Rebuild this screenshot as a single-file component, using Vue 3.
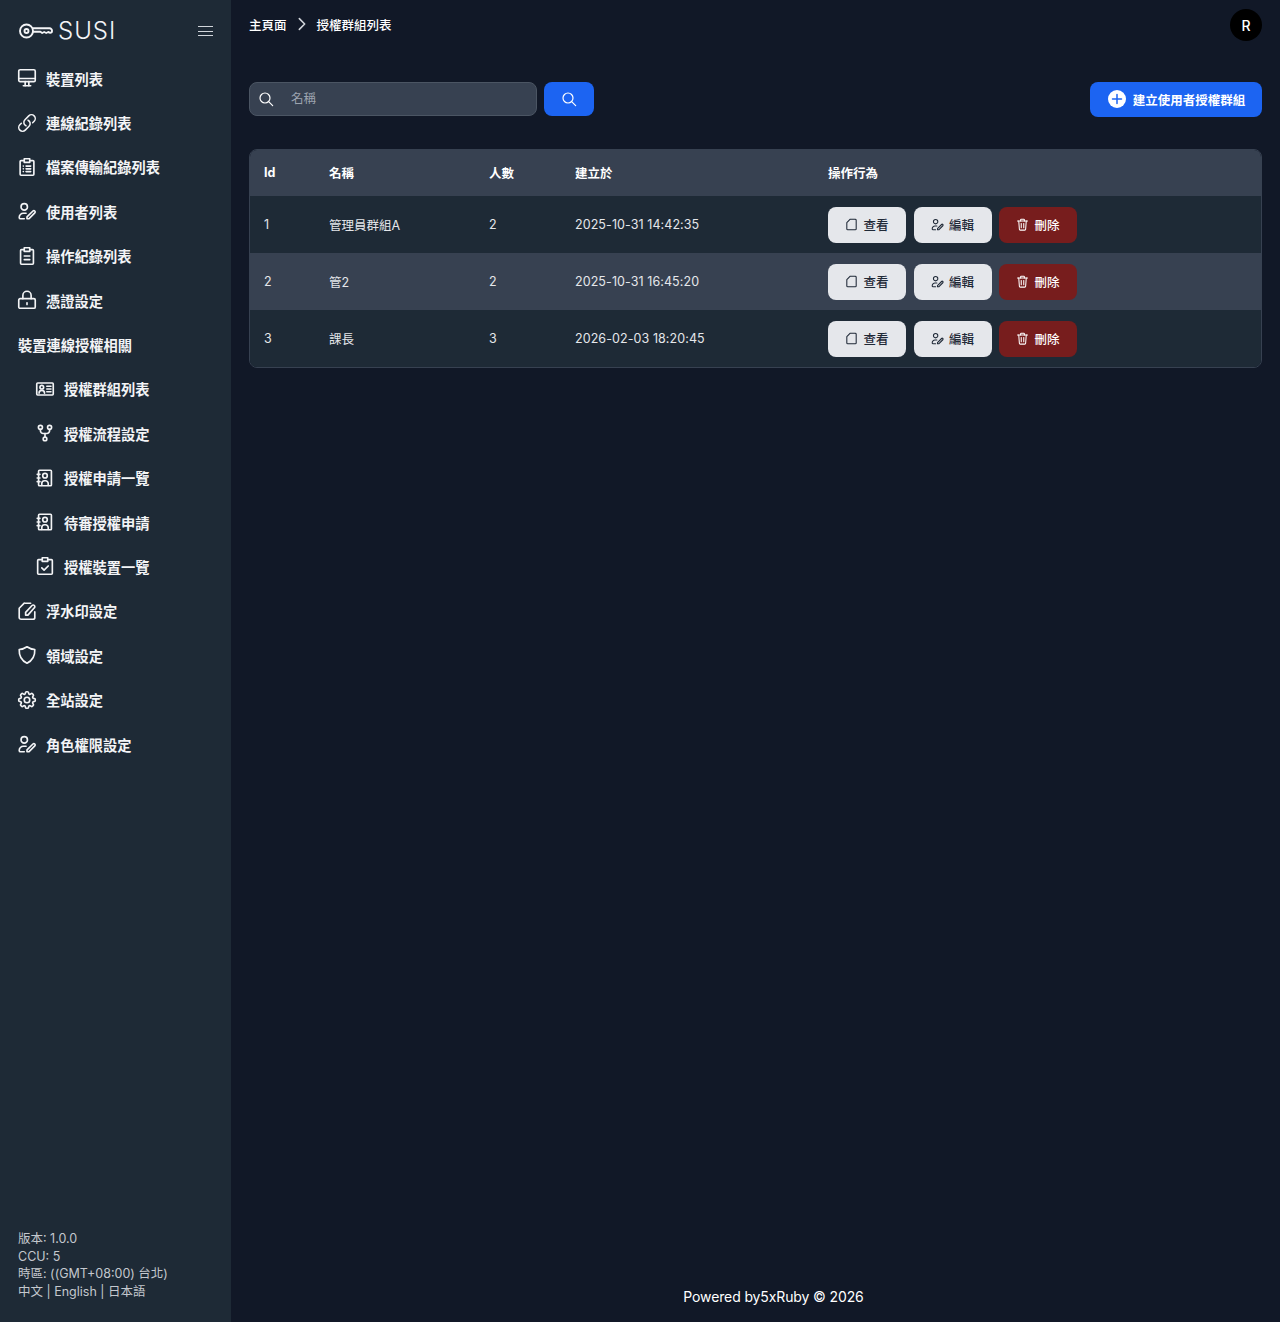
<script setup>
const icons = {
  monitor: ['M4.500 3h15A1.500 1.500 0 0 1 21 4.500v10a1.500 1.500 0 0 1-1.500 1.500h-15A1.500 1.500 0 0 1 3 14.500v-10A1.500 1.500 0 0 1 4.500 3Z', 'M3 12.500h18', 'M10 16v4.500', 'M14 16v4.500', 'M8 20.500h8'],
  link: ['M13.19 8.688a4.5 4.5 0 0 1 1.242 7.244l-4.5 4.5a4.5 4.5 0 0 1-6.364-6.364l1.757-1.757m13.35-.622 1.757-1.757a4.5 4.5 0 0 0-6.364-6.364l-4.5 4.5a4.5 4.5 0 0 0 1.242 7.244'],
  list: ['M9 5H5.500a1 1 0 0 0-1 1v14a1 1 0 0 0 1 1h13a1 1 0 0 0 1-1V6a1 1 0 0 0-1-1H15', 'M9 3h6v4H9z', 'M8 11h.01', 'M11 11h5', 'M8 14h.01', 'M11 14h5', 'M8 17h.01', 'M11 17h5'],
  userPen: ['M9 11a3.500 3.500 0 1 0 0-7 3.500 3.500 0 0 0 0 7Z', 'M9 20.500H5A1.500 1.500 0 0 1 3.500 19a4.500 4.500 0 0 1 4.500-4.500h3', 'M12 20.500v-2L18.500 12a1.400 1.400 0 0 1 2 2L14 20.500h-2Z'],
  clipboard: ['M9 5H6a1 1 0 0 0-1 1v14a1 1 0 0 0 1 1h12a1 1 0 0 0 1-1V6a1 1 0 0 0-1-1h-3', 'M9 3h6v4H9z', 'M9 12h6', 'M9 16h6'],
  lock: ['M4.500 10.500h15a1.500 1.500 0 0 1 1.500 1.500v7.500a1.500 1.500 0 0 1-1.500 1.500h-15A1.500 1.500 0 0 1 3 19.500V12a1.500 1.500 0 0 1 1.500-1.500Z', 'M7.500 10.500V7a4.500 4.500 0 0 1 9 0v3.500', 'M12 15v2'],
  card: ['M4 5.500h16a1 1 0 0 1 1 1v11a1 1 0 0 1-1 1H4a1 1 0 0 1-1-1v-11a1 1 0 0 1 1-1Z', 'M8.500 12a2 2 0 1 0 0-4 2 2 0 0 0 0 4Z', 'M5.500 16.500a3 3 0 0 1 6 0', 'M14 9h4.500', 'M14 12h4.500', 'M14 15h4.500'],
  fork: ['M7 8a2.200 2.200 0 1 0 0-4.400A2.200 2.200 0 0 0 7 8Z', 'M17 8a2.200 2.200 0 1 0 0-4.400A2.200 2.200 0 0 0 17 8Z', 'M12 20.500a2 2 0 1 0 0-4 2 2 0 0 0 0 4Z', 'M7 8v1.500a3 3 0 0 0 3 3h4a3 3 0 0 0 3-3V8', 'M12 12.500v4'],
  book: ['M6 3.500h12a1 1 0 0 1 1 1v15a1 1 0 0 1-1 1H6a1 1 0 0 1-1-1v-15a1 1 0 0 1 1-1Z', 'M3.500 8H6.500', 'M3.500 12H6.500', 'M3.500 16H6.500', 'M12 12a2.500 2.500 0 1 0 0-5 2.500 2.500 0 0 0 0 5Z', 'M8.500 20v-2a3 3 0 0 1 3-3h1a3 3 0 0 1 3 3v2'],
  check: ['M9 5H5a1 1 0 0 0-1 1v14a1 1 0 0 0 1 1h14a1 1 0 0 0 1-1V6a1 1 0 0 0-1-1h-4', 'M9 3h6v4H9z', 'M8.500 14l2.500 2.500 4.500-4.500'],
  filePen: ['M10 3.500h6', 'M20.500 13v6a2 2 0 0 1-2 2h-13a2 2 0 0 1-2-2V9l5.500-5.500', 'M10.500 16.500v-3l7-7.500a1.500 1.500 0 0 1 2.500 2.500l-7 8h-2.500Z'],
  shield: ['M12 3c2.500 1.800 5.500 2.800 8.500 3 .3 6.500-2 11.800-8.500 15C5.500 17.800 3.200 12.500 3.500 6 6.500 5.800 9.500 4.800 12 3Z'],
  cog: ['M10.343 3.94c.09-.542.56-.94 1.11-.94h1.093c.55 0 1.02.398 1.11.94l.149.894c.07.424.384.764.78.93.398.164.855.142 1.205-.108l.737-.527a1.125 1.125 0 0 1 1.45.12l.773.774c.39.389.44 1.002.12 1.45l-.527.737c-.25.35-.272.806-.107 1.204.165.397.505.71.93.78l.893.15c.543.09.94.559.94 1.109v1.094c0 .55-.397 1.02-.94 1.11l-.894.149c-.424.07-.764.383-.929.78-.165.398-.143.854.107 1.204l.527.738c.32.447.269 1.06-.12 1.45l-.774.773a1.125 1.125 0 0 1-1.449.12l-.738-.527c-.35-.25-.806-.272-1.203-.107-.398.165-.71.505-.781.929l-.149.894c-.09.542-.56.94-1.11.94h-1.094c-.55 0-1.019-.398-1.11-.94l-.148-.894c-.071-.424-.384-.764-.781-.93-.398-.164-.854-.142-1.204.108l-.738.527c-.447.32-1.06.269-1.45-.12l-.773-.774a1.125 1.125 0 0 1-.12-1.45l.527-.737c.25-.35.272-.806.108-1.204-.165-.397-.506-.71-.93-.78l-.894-.15c-.542-.09-.94-.56-.94-1.109v-1.094c0-.55.398-1.02.94-1.11l.894-.149c.424-.07.765-.383.93-.78.165-.398.143-.854-.108-1.204l-.526-.738a1.125 1.125 0 0 1 .12-1.45l.773-.773a1.125 1.125 0 0 1 1.45-.12l.737.527c.35.25.807.272 1.204.107.397-.165.71-.505.78-.929l.15-.894Z', 'M15 12a3 3 0 1 1-6 0 3 3 0 0 1 6 0Z'],
  file: ['M10 3.500h8a1.500 1.500 0 0 1 1.500 1.500v14a1.500 1.500 0 0 1-1.500 1.500H6A1.500 1.500 0 0 1 4.500 19V9L10 3.500Z'],
  trash: ['M4 6.500h16', 'M9 6.500V4.500a1 1 0 0 1 1-1h4a1 1 0 0 1 1 1v2', 'M6 6.500l1 13a1.500 1.500 0 0 0 1.500 1.500h7a1.500 1.500 0 0 0 1.500-1.500l1-13', 'M10 10.500v6.500', 'M14 10.500v6.500']
}

const navItems = [
  { label: '裝置列表', icon: 'monitor' },
  { label: '連線紀錄列表', icon: 'link', viewBox: '-1 -1 26 26' },
  { label: '檔案傳輸紀錄列表', icon: 'list' },
  { label: '使用者列表', icon: 'userPen' },
  { label: '操作紀錄列表', icon: 'clipboard' },
  { label: '憑證設定', icon: 'lock' },
  { label: '裝置連線授權相關' },
  { label: '授權群組列表', icon: 'card', sub: true },
  { label: '授權流程設定', icon: 'fork', sub: true },
  { label: '授權申請一覽', icon: 'book', sub: true },
  { label: '待審授權申請', icon: 'book', sub: true },
  { label: '授權裝置一覽', icon: 'check', sub: true },
  { label: '浮水印設定', icon: 'filePen' },
  { label: '領域設定', icon: 'shield' },
  { label: '全站設定', icon: 'cog' },
  { label: '角色權限設定', icon: 'userPen' }
]

const rows = [
  { id: 1, name: '管理員群組A', count: 2, createdAt: '2025-10-31 14:42:35' },
  { id: 2, name: '管2', count: 2, createdAt: '2025-10-31 16:45:20' },
  { id: 3, name: '課長', count: 3, createdAt: '2026-02-03 18:20:45' }
]

const actions = [
  { label: '查看', icon: 'file', cls: 'btn-light' },
  { label: '編輯', icon: 'userPen', cls: 'btn-light' },
  { label: '刪除', icon: 'trash', cls: 'btn-danger' }
]
</script>

<template>
  <div class="layout">
    <aside class="sidebar">
      <div class="brand">
        <div class="logo">
          <svg class="logo-key" viewBox="0 0 34 16" fill="none" stroke="currentColor" stroke-width="1.900" stroke-linecap="round" stroke-linejoin="round">
            <circle cx="7.500" cy="8" r="6.500" />
            <circle cx="7.500" cy="8" r="2" />
            <path d="M14 5.200h16.500a2.600 2.600 0 0 1 2.500 2.800c0 1-.8 1.800-1.800 1.800l-2-.8-2 1-2-1-2 1-1.800-1.200H14" />
          </svg>
          <span class="logo-text">SUSI</span>
        </div>
        <button class="menu-btn" aria-label="menu">
          <span></span><span></span><span></span>
        </button>
      </div>

      <nav class="nav">
        <a
          v-for="item in navItems"
          :key="item.label"
          class="nav-item"
          :class="{ 'is-sub': item.sub, 'is-group': !item.icon }"
        >
          <svg v-if="item.icon" class="nav-icon" :viewBox="item.viewBox || '0 0 24 24'" fill="none" stroke="currentColor" stroke-width="1.800" stroke-linecap="round" stroke-linejoin="round">
            <path v-for="d in icons[item.icon]" :key="d" :d="d" />
          </svg>
          <span>{{ item.label }}</span>
        </a>
      </nav>

      <div class="side-footer">
        <div>版本: 1.0.0</div>
        <div>CCU: 5</div>
        <div>時區: ((GMT+08:00) 台北)</div>
        <div>中文 | English | 日本語</div>
      </div>
    </aside>

    <main class="main">
      <header class="topbar">
        <div class="crumbs">
          <span>主頁面</span>
          <svg class="crumb-sep" viewBox="0 0 24 24" fill="none" stroke="currentColor" stroke-width="2.400" stroke-linecap="round" stroke-linejoin="round">
            <path d="M8 4l8 8-8 8" />
          </svg>
          <span>授權群組列表</span>
        </div>
        <div class="avatar">R</div>
      </header>

      <div class="toolbar">
        <form class="search" @submit.prevent>
          <div class="search-field">
            <svg class="search-icon" viewBox="0 0 24 24" fill="none" stroke="currentColor" stroke-width="1.800" stroke-linecap="round">
              <circle cx="10.500" cy="10.500" r="7.500" />
              <path d="M16 16l6 6" />
            </svg>
            <input type="text" placeholder="名稱" />
          </div>
          <button class="search-btn" type="submit" aria-label="search">
            <svg class="search-icon" viewBox="0 0 24 24" fill="none" stroke="currentColor" stroke-width="1.800" stroke-linecap="round">
              <circle cx="10.500" cy="10.500" r="7.500" />
              <path d="M16 16l6 6" />
            </svg>
          </button>
        </form>
        <button class="create-btn">
          <svg class="plus-icon" viewBox="0 0 18 18">
            <circle cx="9" cy="9" r="9" fill="#fff" />
            <path d="M9 4.500v9M4.500 9h9" stroke="#1c64f2" stroke-width="1.500" stroke-linecap="round" />
          </svg>
          建立使用者授權群組
        </button>
      </div>

      <div class="table-wrap">
        <table class="table">
          <colgroup>
            <col class="col-id" />
            <col class="col-name" />
            <col class="col-count" />
            <col class="col-date" />
            <col />
          </colgroup>
          <thead>
            <tr>
              <th>Id</th>
              <th>名稱</th>
              <th>人數</th>
              <th>建立於</th>
              <th>操作行為</th>
            </tr>
          </thead>
          <tbody>
            <tr v-for="row in rows" :key="row.id">
              <td>{{ row.id }}</td>
              <td>{{ row.name }}</td>
              <td>{{ row.count }}</td>
              <td class="date">{{ row.createdAt }}</td>
              <td>
                <div class="actions">
                  <button v-for="action in actions" :key="action.label" class="action-btn" :class="action.cls">
                    <svg class="action-icon" viewBox="0 0 24 24" fill="none" stroke="currentColor" stroke-width="1.700" stroke-linecap="round" stroke-linejoin="round">
                      <path v-for="d in icons[action.icon]" :key="d" :d="d" />
                    </svg>
                    {{ action.label }}
                  </button>
                </div>
              </td>
            </tr>
          </tbody>
        </table>
      </div>

      <footer class="footer">Powered by5xRuby © 2026</footer>
    </main>
  </div>
</template>

<style>
body {
  background: #111827;
}
</style>

<style scoped>
.layout {
  display: flex;
  min-height: 1322px;
  background: #111827;
  color: #fff;
  font-family: Inter, "Noto Sans CJK TC", sans-serif;
}

.sidebar {
  width: 231px;
  flex-shrink: 0;
  display: flex;
  flex-direction: column;
  background: #1e2a36;
}

.brand {
  height: 56px;
  padding: 6px 18px 0 19px;
  box-sizing: border-box;
  display: flex;
  align-items: center;
  justify-content: space-between;
}

.logo {
  display: flex;
  align-items: center;
  gap: 5px;
  color: #f3f4f6;
}

.logo-key {
  width: 34px;
  height: 16px;
}

.logo-text {
  font-size: 24px;
  font-weight: 300;
  letter-spacing: 1px;
  line-height: 1;
}

.menu-btn {
  width: 15px;
  padding: 0;
  display: flex;
  flex-direction: column;
  gap: 3.500px;
  border: 0;
  background: none;
}

.menu-btn span {
  display: block;
  height: 1px;
  background: #d1d5db;
}

.nav-item {
  height: 44.400px;
  padding-left: 16px;
  display: flex;
  align-items: center;
  gap: 8px;
  font-size: 14.250px;
  font-weight: 700;
  color: #f3f4f6;
}

.nav-item.is-sub {
  padding-left: 34px;
}

.nav-item.is-group {
  padding-left: 18px;
}

.nav-icon {
  width: 22px;
  height: 22px;
  flex-shrink: 0;
}

.side-footer {
  margin-top: auto;
  padding: 0 18px 22px;
  font-size: 12.500px;
  line-height: 17.500px;
  color: #c4c8ce;
}

.main {
  flex: 1;
  min-width: 0;
  padding: 0 18px;
  display: flex;
  flex-direction: column;
}

.topbar {
  height: 50px;
  display: flex;
  align-items: center;
  justify-content: space-between;
}

.crumbs {
  padding-bottom: 2px;
  display: flex;
  align-items: center;
  gap: 7px;
  font-size: 12.500px;
  font-weight: 500;
}

.crumb-sep {
  width: 16px;
  height: 16px;
  color: #d1d5db;
}

.avatar {
  width: 32px;
  height: 32px;
  border-radius: 50%;
  background: #000;
  display: flex;
  align-items: center;
  justify-content: center;
  font-size: 14px;
  font-weight: 500;
}

.toolbar {
  margin-top: 32px;
  display: flex;
  align-items: flex-start;
  justify-content: space-between;
}

.search {
  display: flex;
  gap: 7px;
}

.search-field {
  width: 288px;
  height: 34px;
  box-sizing: border-box;
  padding-left: 8px;
  display: flex;
  align-items: center;
  gap: 17px;
  border: 1px solid #4b5563;
  border-radius: 8px;
  background: #374151;
}

.search-field input {
  flex: 1;
  min-width: 0;
  padding: 0 0 2px;
  border: 0;
  outline: 0;
  background: none;
  color: #fff;
  font: inherit;
  font-size: 12.500px;
}

.search-field input::placeholder {
  color: #9ca3af;
}

.search-icon {
  width: 16px;
  height: 16px;
  flex-shrink: 0;
  color: #fff;
}

.search-btn {
  width: 50px;
  height: 34px;
  padding: 0;
  display: flex;
  align-items: center;
  justify-content: center;
  border: 0;
  border-radius: 8px;
  background: #1c64f2;
}

.create-btn {
  width: 172px;
  height: 35px;
  padding: 0 0 1px 1px;
  display: flex;
  align-items: center;
  justify-content: center;
  gap: 7px;
  border: 0;
  border-radius: 8px;
  background: #1c64f2;
  color: #fff;
  font: inherit;
  font-size: 12.500px;
  font-weight: 700;
}

.plus-icon {
  width: 18px;
  height: 18px;
}

.table-wrap {
  margin-top: 32px;
  border: 1px solid #374151;
  border-radius: 8px;
  overflow: hidden;
}

.table {
  width: 100%;
  table-layout: fixed;
  border-collapse: collapse;
  font-size: 12.500px;
}

.col-id {
  width: 65px;
}

.col-name {
  width: 160px;
}

.col-count {
  width: 86px;
}

.col-date {
  width: 253px;
}

.table th,
.table td {
  box-sizing: border-box;
  padding: 0 14px;
  text-align: left;
}

.table th {
  height: 46px;
  padding-bottom: 2px;
  background: #374151;
  font-weight: 700;
}

.table td {
  height: 57px;
  color: #e5e7eb;
  background: #1e2a36;
}

.table td.date {
  letter-spacing: 0.080px;
}

.table tbody tr:nth-child(even) td {
  background: #374151;
}

.actions {
  display: flex;
  gap: 7.500px;
}

.action-btn {
  width: 78px;
  height: 36px;
  padding: 0 1px 0 0;
  display: flex;
  align-items: center;
  justify-content: center;
  gap: 4px;
  border: 0;
  border-radius: 8px;
  font: inherit;
  font-size: 12.500px;
  font-weight: 500;
}

.btn-light {
  background: #e5e7eb;
  color: #1f2937;
}

.btn-danger {
  background: #771d1d;
  color: #fff;
}

.action-icon {
  width: 15px;
  height: 15px;
}

.footer {
  margin-top: auto;
  padding: 0 0 16px 36px;
  text-align: center;
  font-size: 14px;
  letter-spacing: -0.120px;
  line-height: 18px;
}
</style>
